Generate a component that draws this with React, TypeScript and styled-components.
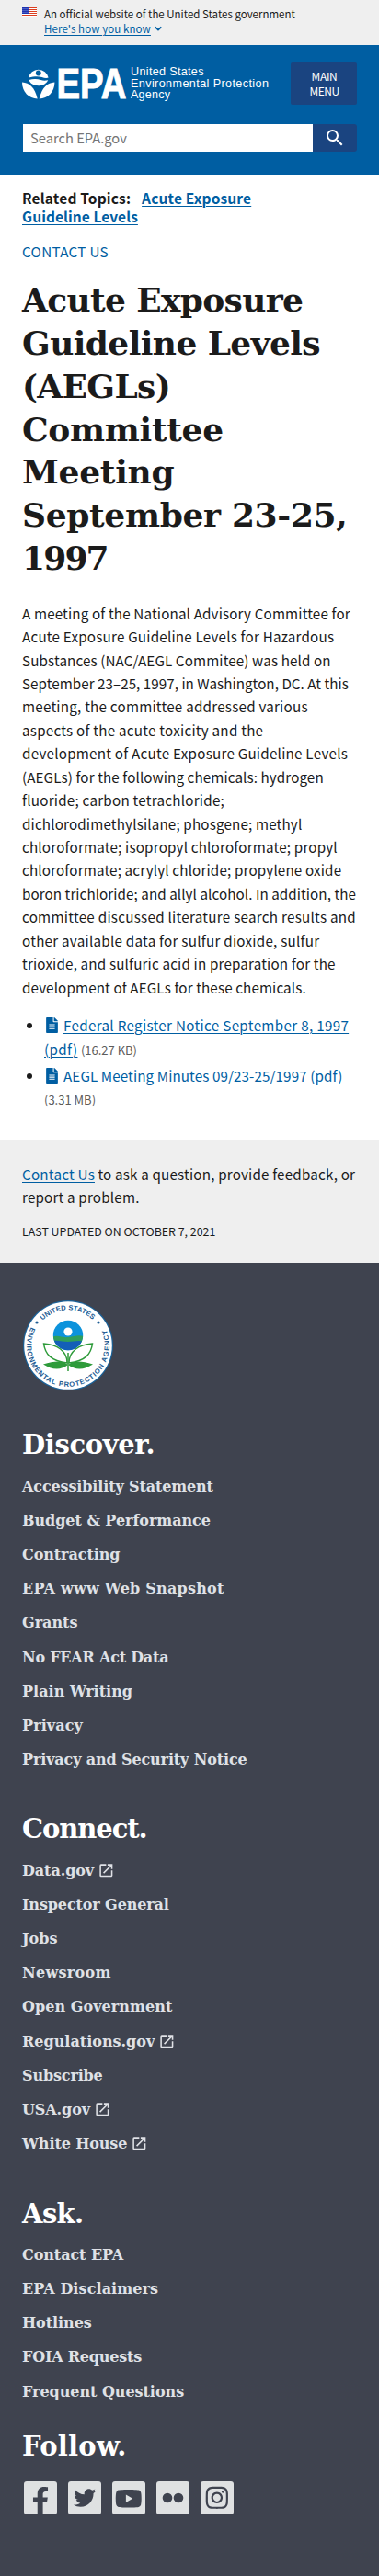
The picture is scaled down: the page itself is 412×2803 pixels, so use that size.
import React from 'react';
import styled, { createGlobalStyle } from 'styled-components';
import { MdOpenInNew, MdSearch } from 'react-icons/md';
import { FaFacebookF, FaFileAlt, FaInstagram, FaTwitter, FaYoutube } from 'react-icons/fa';

const sans = '"Noto Sans CJK SC", "Open Sans", sans-serif';
const serif = '"DejaVu Serif", serif';

const GlobalStyle = createGlobalStyle`
  * { box-sizing: border-box; }
  body {
    margin: 0;
    background: #fff;
    color: #1b1b1b;
    font-family: ${sans};
    font-size: 15.2px;
    line-height: 25.44px;
  }
  a { color: #005ea2; text-underline-offset: 2px; text-decoration-thickness: 1px; }
`;

const Page = styled.div`width: 412px; overflow: hidden;`;

const Track = styled.span<{ $s?: number }>`letter-spacing: ${p => p.$s ?? 0}px;`;
const Line = styled.span<{ $s?: number }>`
  display: block;
  white-space: nowrap;
  letter-spacing: ${p => p.$s ?? 0}px;
`;

const Banner = styled.div`
  display: flex;
  gap: 8px;
  height: 49px;
  padding: 7px 24px 0;
  background: #efefef;
  font-size: 11.5px;
  line-height: 16px;
`;
const Flag = styled.svg`display: block; margin-top: 1px;`;
const BannerAction = styled.div`
  display: flex;
  align-items: center;
  gap: 4px;
  color: #005ea2;
`;

const Header = styled.header`
  display: flex;
  flex-direction: column;
  gap: 21px;
  height: 141px;
  padding: 19px 24px 0;
  background: #005ea2;
`;
const HeaderTop = styled.div`display: flex; justify-content: space-between;`;
const Logo = styled.svg`display: block; margin-top: 2px;`;
const MenuButton = styled.button`
  width: 72px;
  height: 46px;
  padding: 0 0 1px 1px;
  border: 0;
  border-radius: 2px;
  background: #1a4480;
  color: #fff;
  font: 12px/16px ${sans};
`;
const SearchForm = styled.div`display: flex; height: 30px;`;
const SearchField = styled.div`
  flex: 1;
  margin-left: 1px;
  padding-left: 8px;
  background: #fff;
  color: #757575;
  font-size: 14.7px;
  line-height: 29px;
`;
const SearchButton = styled.button`
  display: flex;
  align-items: center;
  justify-content: center;
  width: 48px;
  padding: 0;
  border: 0;
  border-radius: 0 3px 3px 0;
  background: #1a4480;
  color: #fff;
`;

const Main = styled.main`padding: 15.4px 24px 32.6px;`;
const Related = styled.div`
  font-size: 15.5px;
  font-weight: 700;
  line-height: 20px;
`;
const RelatedLink = styled.a<{ $s: number }>`letter-spacing: ${p => p.$s}px;`;
const RelatedLabel = styled.span`
  margin-right: 12px;
  letter-spacing: 0.17px;
`;
const ContactLink = styled.div`margin-top: 16px; color: #005ea2;`;
const Title = styled.h1`
  margin: 16px 0 23.5px;
  font: 700 36px/46.9px ${serif};
`;
const Paragraph = styled.p`margin: 0;`;
const FileList = styled.ul`
  display: flex;
  flex-direction: column;
  gap: 4px;
  margin: 16px 0 0;
  padding: 0 0 0 24px;
`;
const FileItem = styled.li`height: 50.9px;`;
const FileIcon = styled(FaFileAlt)`
  width: 13px;
  height: 17px;
  margin: 0 6px 0 2px;
  vertical-align: -2px;
  color: #005ea2;
`;
const FileSize = styled.span`
  color: #5c5c5c;
  font-size: 13px;
  line-height: 1;
`;

const PageInfo = styled.section`
  padding: 23.3px 24px 23.4px;
  background: #efefef;
`;
const Updated = styled.div`
  margin-top: 14.8px;
  font-size: 12.4px;
  line-height: 20px;
`;

const Footer = styled.footer`
  height: 1429px;
  padding: 40px 24px 0;
  background: #3f434f;
`;
const Seal = styled.svg`display: block; overflow: visible;`;
const FooterHeading = styled.h2<{ $top: number; $s: number }>`
  margin: ${p => p.$top}px 0 6.5px;
  color: #fff;
  font: 700 29px/40px ${serif};
  letter-spacing: ${p => p.$s}px;
`;
const LinkList = styled.ul`margin: 0; padding: 0; list-style: none;`;
const LinkItem = styled.li<{ $s: number }>`
  height: 37.15px;
  color: #dfe1e6;
  font: 700 16px/37.15px ${serif};
  letter-spacing: ${p => p.$s}px;
  white-space: nowrap;
`;
const ExternalIcon = styled(MdOpenInNew)`
  width: 18.7px;
  height: 18.7px;
  margin-left: 4px;
  vertical-align: -4px;
`;
const Social = styled.div`display: flex; gap: 12px; margin: 18px 0 0 2px;`;
const SocialTile = styled.a<{ $end?: boolean }>`
  display: flex;
  align-items: ${p => (p.$end ? 'flex-end' : 'center')};
  justify-content: center;
  width: 36px;
  height: 36px;
  border-radius: 3px;
  background: #dfe1e2;
  color: #3f434f;
`;

type Entry = [text: string, spacing: number, external?: boolean];

const titleLines: Entry[] = [
  ['Acute Exposure', -0.66],
  ['Guideline Levels', -0.6],
  ['(AEGLs)', -0.68],
  ['Committee', -0.32],
  ['Meeting', -0.27],
  ['September 23-25,', -0.34],
  ['1997', -1.85],
];

const bodyLines: Entry[] = [
  ['A meeting of the National Advisory Committee for', 0.15],
  ['Acute Exposure Guideline Levels for Hazardous', 0.21],
  ['Substances (NAC/AEGL Commitee) was held on', 0.12],
  ['September 23–25, 1997, in Washington, DC. At this', 0.04],
  ['meeting, the committee addressed various', 0.23],
  ['aspects of the acute toxicity and the', 0.24],
  ['development of Acute Exposure Guideline Levels', 0.24],
  ['(AEGLs) for the following chemicals: hydrogen', 0.1],
  ['fluoride; carbon tetrachloride;', 0.24],
  ['dichlorodimethylsilane; phosgene; methyl', 0.16],
  ['chloroformate; isopropyl chloroformate; propyl', 0.19],
  ['chloroformate; acrylyl chloride; propylene oxide', 0.16],
  ['boron trichloride; and allyl alcohol. In addition, the', 0.07],
  ['committee discussed literature search results and', 0.27],
  ['other available data for sulfur dioxide, sulfur', 0.25],
  ['trioxide, and sulfuric acid in preparation for the', 0.17],
  ['development of AEGLs for these chemicals.', 0.12],
];

const discover: Entry[] = [
  ['Accessibility Statement', -0.13],
  ['Budget & Performance', -0.04],
  ['Contracting', -0.08],
  ['EPA www Web Snapshot', 0.23],
  ['Grants', 0],
  ['No FEAR Act Data', -0.22],
  ['Plain Writing', 0.02],
  ['Privacy', 0.1],
  ['Privacy and Security Notice', -0.13],
];
const connect: Entry[] = [
  ['Data.gov', -0.08, true],
  ['Inspector General', -0.12],
  ['Jobs', 0],
  ['Newsroom', 0.3],
  ['Open Government', 0.06],
  ['Regulations.gov', 0, true],
  ['Subscribe', -0.15],
  ['USA.gov', -0.1, true],
  ['White House', -0.1, true],
];
const ask: Entry[] = [
  ['Contact EPA', -0.07],
  ['EPA Disclaimers', 0.09],
  ['Hotlines', -0.05],
  ['FOIA Requests', -0.2],
  ['Frequent Questions', -0.04],
];

const Lines = ({ items }: { items: Entry[] }) => (
  <>{items.map(([text, s]) => <Line key={text} $s={s}>{text}</Line>)}</>
);

const Links = ({ items }: { items: Entry[] }) => (
  <LinkList>
    {items.map(([text, s, external]) => (
      <LinkItem key={text} $s={s}>{text}{external && <ExternalIcon />}</LinkItem>
    ))}
  </LinkList>
);

const UsFlag = () => (
  <Flag width="16" height="11" viewBox="0 0 16 11">
    <rect width="16" height="11" fill="#fff" />
    {[0, 2, 4, 6, 8, 10].map(y => <rect key={y} y={y} width="16" height="1" fill="#db3e1f" />)}
    <rect width="8" height="7" fill="#1e33b1" />
    {[1, 3, 5].map(y => [1, 3, 5, 7].map(x => (
      <circle key={`${x}-${y}`} cx={x} cy={y + 0.4} r="0.45" fill="#fff" />
    )))}
  </Flag>
);

const Chevron = () => (
  <svg width="8" height="6" viewBox="0 0 8 6" fill="none" stroke="currentColor" strokeWidth="1.7">
    <path d="M.7 1.300 4 4.500 7.300 1.300" />
  </svg>
);

const EpaLogo = () => (
  <Logo width="270" height="42" viewBox="0 0 270 42" fill="#fff">
    <path d="M7 14.6a11 11 0 0 1 21.6 0c-2.400 .7-4.500 .2-7-.6-4-1.200-8.500-1-14.600 .6z" />
    <circle cx="17.800" cy="9.500" r="2.900" fill="#005ea2" />
    <path d="M7.300 17c5-1.500 9-1.400 13 0 2.500 .8 5 .9 7.900 .2-1.700 3.700-5.800 6-10.300 6-5 0-9.100-2.400-10.600-6.200z" />
    <path d="M0 19.500c8 .8 13.500 5 16.700 17.900C7.500 37.400 0 30 0 19.500z" />
    <path d="M35.400 19.500c-8 .8-13.500 5-16.700 17.900 9.200 0 16.700-7.400 16.700-17.900z" />
    <text x="37.500" y="36.500" fontFamily="Liberation Sans, sans-serif" fontWeight="700" fontSize="46.500" textLength="76" lengthAdjust="spacingAndGlyphs" stroke="#fff" strokeWidth="1">EPA</text>
    <g fontFamily="Liberation Sans, sans-serif" fontSize="12.600">
      <text x="118" y="12" textLength="79.500">United States</text>
      <text x="118" y="24.500" textLength="150">Environmental Protection</text>
      <text x="118" y="37" textLength="43">Agency</text>
    </g>
  </Logo>
);

const EpaSeal = () => (
  <Seal width="100" height="100" viewBox="-50 -50 100 100">
    <defs>
      <path id="seal-top" d="M-27.600-27.100A38.700 38.700 0 0 1 27.600-27.100" />
      <path id="seal-bottom" d="M-40.200-20A44.900 44.900 0 1 0 40.200-20" />
      <clipPath id="seal-globe"><circle cy="-11" r="16.200" /></clipPath>
    </defs>
    <circle r="49" fill="#1b6299" />
    <circle r="47.800" fill="#fff" />
    <g fill="#1d5c94" fontFamily="Liberation Sans, sans-serif" fontWeight="700" fontSize="7.600">
      <text textLength="60"><textPath href="#seal-top" textLength="60">UNITED STATES</textPath></text>
      <text textLength="179"><textPath href="#seal-bottom" textLength="179">ENVIRONMENTAL PROTECTION AGENCY</textPath></text>
    </g>
    <circle cx="-34" cy="-25" r="1.600" fill="#1d5c94" />
    <circle cx="33" cy="-25" r="1.600" fill="#1d5c94" />
    <g clipPath="url(#seal-globe)">
      <rect x="-17" y="-28" width="34" height="34" fill="#0c93dc" />
      <path d="M-17-9c6-3 10 1 17 0s11-3 17-1v8c-8-1-12 3-18 1s-11-2-16 0z" fill="#2f9f5c" />
      <path d="M-17-5c7-1 11 1 17 1s11-2 17 0v12h-34z" fill="#135fb8" />
    </g>
    <circle cy="-15" r="4.600" fill="#fff" />
    <g fill="none" stroke="#2e9b3a" strokeWidth="1.500">
      <path d="M0 8v20" />
      <path d="M-1 19C-1 6-12-1-26.500-2-25 9-19 17-1 19z" />
      <path d="M1 19C1 6 12-1 26.500-2 25 9 19 17 1 19z" />
    </g>
    <path d="M0 21c-6-5-15-4-27-.5 9 6 19 7 27 .5 8 6.500 18 5.500 27-.5-12-3.500-21-4.500-27 .5z" fill="#2e9b3a" />
  </Seal>
);

const FlickrDots = () => (
  <svg width="24" height="12" viewBox="0 0 24 12" fill="currentColor">
    <circle cx="6" cy="6" r="5.300" />
    <circle cx="18" cy="6" r="5.300" />
  </svg>
);

export default function App() {
  return (
    <Page>
      <GlobalStyle />
      <Banner>
        <UsFlag />
        <div>
          <Line>An official website of the United States government</Line>
          <BannerAction>
            <a href="#know"><Track $s={0.1}>Here's how you know</Track></a>
            <Chevron />
          </BannerAction>
        </div>
      </Banner>
      <Header>
        <HeaderTop>
          <EpaLogo />
          <MenuButton><Line $s={-0.3}>MAIN</Line><Line $s={-0.5}>MENU</Line></MenuButton>
        </HeaderTop>
        <SearchForm>
          <SearchField>Search EPA.gov</SearchField>
          <SearchButton aria-label="Search"><MdSearch size={24} /></SearchButton>
        </SearchForm>
      </Header>
      <Main>
        <Related>
          <Line>
            <RelatedLabel>Related Topics:</RelatedLabel>
            <RelatedLink href="#topic" $s={0.15}>Acute Exposure</RelatedLink>
          </Line>
          <RelatedLink href="#topic" $s={0.07}>Guideline Levels</RelatedLink>
        </Related>
        <ContactLink><Track $s={0.33}>CONTACT US</Track></ContactLink>
        <Title><Lines items={titleLines} /></Title>
        <Paragraph><Lines items={bodyLines} /></Paragraph>
        <FileList>
          <FileItem>
            <FileIcon /><a href="#notice"><Track $s={0.32}>Federal Register Notice September 8, 1997<br />(pdf)</Track></a>{' '}
            <FileSize>(16.27 KB)</FileSize>
          </FileItem>
          <FileItem>
            <FileIcon /><a href="#minutes"><Track $s={0.1}>AEGL Meeting Minutes 09/23-25/1997 (pdf)</Track></a><br />
            <FileSize>(3.31 MB)</FileSize>
          </FileItem>
        </FileList>
      </Main>
      <PageInfo>
        <Line><a href="#contact"><Track $s={0.22}>Contact Us</Track></a> <Track $s={0.18}>to ask a question, provide feedback, or</Track></Line>
        <Line $s={0.18}>report a problem.</Line>
        <Updated>LAST UPDATED ON OCTOBER 7, 2021</Updated>
      </PageInfo>
      <Footer>
        <EpaSeal />
        <FooterHeading $top={38.5} $s={-0.35}>Discover.</FooterHeading>
        <Links items={discover} />
        <FooterHeading $top={37.2} $s={-1.07}>Connect.</FooterHeading>
        <Links items={connect} />
        <FooterHeading $top={37.5} $s={-0.62}>Ask.</FooterHeading>
        <Links items={ask} />
        <FooterHeading $top={21.5} $s={0.24}>Follow.</FooterHeading>
        <Social>
          <SocialTile href="#facebook" $end><FaFacebookF size={30} /></SocialTile>
          <SocialTile href="#twitter"><FaTwitter size={24} /></SocialTile>
          <SocialTile href="#youtube"><FaYoutube size={29.5} /></SocialTile>
          <SocialTile href="#flickr"><FlickrDots /></SocialTile>
          <SocialTile href="#instagram"><FaInstagram size={27.7} /></SocialTile>
        </Social>
      </Footer>
    </Page>
  );
}
